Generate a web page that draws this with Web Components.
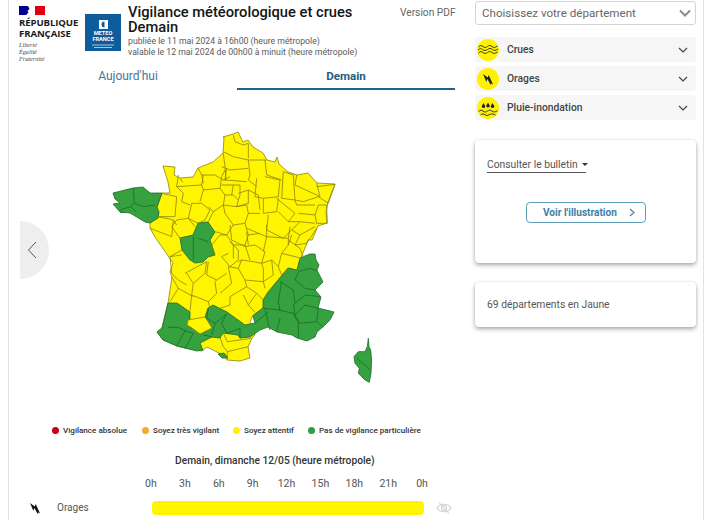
<!DOCTYPE html>
<html lang="fr">
<head>
<meta charset="utf-8">
<title>Vigilance</title>
<style>
  html, body { margin: 0; height: 520px; overflow: hidden; background: #fff; }
  body { font-family: Roboto, "Liberation Sans", sans-serif; }
</style>
</head>
<body>
<vigi-page>
  <vigi-header slot="header"></vigi-header>
  <vigi-tabs slot="main"></vigi-tabs>
  <vigi-map slot="main"></vigi-map>
  <vigi-legend slot="main"></vigi-legend>
  <vigi-timeline slot="main"></vigi-timeline>

  <dept-select slot="side"></dept-select>
  <risk-row slot="side" risk="crues">Crues</risk-row>
  <risk-row slot="side" risk="orages">Orages</risk-row>
  <risk-row slot="side" risk="pluie">Pluie-inondation</risk-row>
  <bulletin-card slot="side"></bulletin-card>
  <count-card slot="side">69 départements en Jaune</count-card>
</vigi-page>

<script>
const ICONS = {
  crues: `<path d="M1.500 8c2-1.800 3-1.800 4.500-.5s3 1.300 4.500 0 3-1.300 4.500 0 3 1.300 5.500-.5" /><path d="M1 11c2-1.800 3-1.800 4.500-.5s3.500 1.300 5 0 3.500-1.300 5 0 3 1.300 5.500-.5" /><path d="M1.500 14c2-1.800 3-1.800 4.500-.5s3 1.300 4.500 0 3-1.300 4.500 0 3 1.300 5.500-.5" />`,
  orages: `<path fill="#222" stroke="none" d="M6 6l4.800 3.600.9-2.600 4.300 9.500-1.900-1-.3 1.600-3.400-6-1.100 2.600z"/>`,
  pluie: `<path fill="#222" stroke="none" d="M6.500 6l1.800 3.300a1.800 1.800 0 1 1-3.600 0zM11 5.500l1.800 3.300a1.800 1.800 0 1 1-3.600 0zM15.500 6l1.800 3.300a1.800 1.800 0 1 1-3.600 0z"/><path d="M1.500 14.500c2-1.600 3-1.600 4.500-.4s3 1.200 4.500 0 3-1.200 4.500 0 3 1.200 5.500-.4"/><path d="M3.500 18c2-1.400 3-1.400 4.500-.3s2.500 1 4 0 3-1.100 6.500.3"/>`
}

class VigiPage extends HTMLElement {
  constructor() {
    super()
    this.attachShadow({ mode: 'open' })
    this.shadowRoot.innerHTML = `<style>
      :host { display: block; width: 696px; height: 520px; margin-left: 8px; box-sizing: border-box;
        border-left: 1px solid #e2e2e2; border-right: 1px solid #e2e2e2; overflow: hidden; }
      .cols { display: grid; grid-template-columns: 446px 221px; column-gap: 20px; }
      .main { display: flex; flex-direction: column; }
      .side { display: flex; flex-direction: column; padding-top: 1px; }
    </style>
    <div class="cols">
      <div class="main"><slot name="header"></slot><slot name="main"></slot></div>
      <div class="side"><slot name="side"></slot></div>
    </div>`
  }
}
customElements.define('vigi-page', VigiPage)

class VigiHeader extends HTMLElement {
  constructor() {
    super()
    this.attachShadow({ mode: 'open' })
    this.shadowRoot.innerHTML = `<style>
      :host { display: flex; height: 66px; padding: 5px 0 0 10px; box-sizing: border-box; }
      .rf { width: 66px; flex: none; }
      .flag { display: block; margin: 1px 0 2px; }
      .rf b { display: block; font: 700 9.600px/11px "Open Sans", sans-serif; color: #1a1a1a; white-space: nowrap; letter-spacing: -.1px; }
      .rf i { display: block; font: italic 6.200px/6.800px "Liberation Serif", serif; color: #444; margin-top: 3px; }
      .mf { width: 36px; height: 37px; background: #0f5c9c; margin-top: 9px; display: flex; flex-direction: column; align-items: center; color: #fff; flex: none; }
      .mf svg { margin-top: 6px; display: block; }
      .mf span { font: 700 5.600px/5.500px Roboto, sans-serif; text-align: center; margin-top: 2px; }
      .mf .tiny { margin-top: 2px; }
      .txt { margin-left: 7px; width: 267px; flex: none; }
      h1 { margin: 0; font: 500 14.700px/15px Roboto, sans-serif; color: #151515; white-space: nowrap; padding-bottom: 1px; }
      p { margin: 0; font: 400 8.700px/11px Roboto, sans-serif; color: #5a5a5a; white-space: nowrap; }
      .pdf { font: 400 10.200px/14px Roboto, sans-serif; color: #666; margin: 1px 0 0 5px; white-space: nowrap; }
    </style>
    <div class="rf">
      <svg class="flag" width="27" height="9" viewBox="0 0 27 9">
        <rect width="27" height="9" fill="#fff"/>
        <rect width="11" height="9" fill="#000091"/>
        <rect x="16" width="10" height="9" fill="#e1000f"/>
        <path fill="#fff" d="M9 0h4l-1 3 1.500 1.500-1 1.500.5 3H7l2.500-2.500L8.500 5 10.500 3z"/>
      </svg>
      <b>RÉPUBLIQUE<br>FRANÇAISE</b>
      <i>Liberté<br>Égalité<br>Fraternité</i>
    </div>
    <div class="mf">
      <svg width="9" height="9" viewBox="0 0 9 9"><rect width="9" height="9" fill="#fff"/><path d="M5.500 1.500a3 3 0 1 0 0 6z" fill="#0f5c9c"/></svg>
      <span>METEO<br>FRANCE</span>
      <svg class="tiny" width="24" height="5" viewBox="0 0 24 5"><path d="M1 1h22M3 3.500h18" stroke="#cfe0ee" stroke-width=".8"/></svg>
    </div>
    <div class="txt">
      <h1>Vigilance météorologique et crues<br>Demain</h1>
      <p>publiée le 11 mai 2024 à 16h00 (heure métropole)</p>
      <p>valable le 12 mai 2024 de 00h00 à minuit (heure métropole)</p>
    </div>
    <div class="pdf">Version PDF</div>`
  }
}
customElements.define('vigi-header', VigiHeader)

class VigiTabs extends HTMLElement {
  constructor() {
    super()
    this.attachShadow({ mode: 'open' })
    this.shadowRoot.innerHTML = `<style>
      :host { display: grid; grid-template-columns: 218px 218px; height: 24px; font: 400 12px/20px Roboto, sans-serif; padding-left: 10px; box-sizing: border-box; width: 446px; }
      div { text-align: center; color: #4b7396; box-sizing: border-box; height: 24px; }
      .on { color: #245f80; font-weight: 700; font-size: 11.600px; border-bottom: 2px solid #1f6388; }
    </style>
    <div>Aujourd'hui</div><div class="on">Demain</div>`
  }
}
customElements.define('vigi-tabs', VigiTabs)

class VigiMap extends HTMLElement {
  constructor() {
    super()
    this.attachShadow({ mode: 'open' })
    // traced by eye; inner borders are in zoomed crop coordinates (3x) inside each group
    this.shadowRoot.innerHTML = `<style>
      :host { display: block; position: relative; height: 323px; padding: 35px 0 0 91px; box-sizing: border-box; }
      svg { display: block; }
      .y { fill: #fff500; stroke: #8b8412; stroke-width: .8; stroke-linejoin: round; }
      .g { fill: #35a23f; stroke: #1d6a2b; stroke-width: .8; stroke-linejoin: round; }
      .ly path { fill: none; stroke: #8b8412; stroke-width: .8; vector-effect: non-scaling-stroke; }
      .lg path { fill: none; stroke: #1d6a2b; stroke-width: .8; vector-effect: non-scaling-stroke; }
      .lg path.g { fill: #35a23f; }
      .prev { position: absolute; left: 11px; top: 131px; width: 29px; height: 58px; background: #eee; border-radius: 0 29px 29px 0; display: flex; align-items: center; }
      .prev svg { margin-left: 7px; }
    </style>
    <div class="prev"><svg width="10" height="18" viewBox="0 0 10 18"><path d="M9 1 1.500 9 9 17" fill="none" stroke="#555" stroke-width="1"/></svg></div>
    <svg width="290" height="270" viewBox="100 125 290 270">
      <path class="y" d="M223 137 233 134 238 132 243 142 248 140 253 147 263 153 267 160 275 162 277 157 279 164 288 172 297 175 308 173 317 183 335 184 328 202 326 212 327 223 318 226 312 240 308 240 305 248 300 260 297 272 290 268 280 282 267 295 263 308 253 315 250 322 255 335 252 338 248 347 250 358 240 361 227 360 223 355 207 347 202 351 185 348 177 346 163 340 157 332 162 328 168 303 172 277 170 272 173 263 164 250 155 237 150 228 150 223 158 218 157 207 162 193 170 193 168 182 163 166 175 167 174 175 180 178 193 177 198 168 213 162 223 153 224 137z"/>
      <path class="g" d="M113 193 125 190 133 188 143 187 150 193 162 193 157 207 159 212 158 218 150 223 145 222 130 213 120 212 113 204 120 203 115 199z"/>
      <path class="g" d="M180 238 193 235 198 223 208 222 215 232 210 240 215 255 208 257 203 262 195 263 190 260 182 250z"/>
      <path class="g" d="M168 303 177 303 190 312 190 319 187 325 192 328 200 334 212 328 205 317 208 308 213 305 227 312 245 325 255 323 253 316 263 308 263 300 268 292 288 268 297 270 300 258 310 254 315 254 316 260 319 265 317 270 323 282 315 290 321 297 318 308 334 312 330 320 325 325 317 332 315 337 307 341 297 338 292 335 277 332 268 327 260 330 250 337 240 338 238 335 223 333 220 338 212 337 200 343 203 350 197 351 185 348 177 346 163 340 157 332 162 328z"/>
      <path class="y" d="M188 320 205 317 212 328 200 334 192 328 187 325z"/>
      <path class="g" d="M218 354 224 353 228 358 222 358z"/>
      <g class="ly" transform="translate(220 125) scale(.3333)">
        <path d="M40 30 45 50 70 60 85 55 85 100M10 80 40 95 85 105 140 105M5 125 30 135 85 130M85 105 90 150 85 165 110 185M135 105 140 150 185 165M20 130 15 165 80 170M190 140 185 220M110 160 105 215 130 220 175 215 180 165 135 155M190 140 220 150 225 225 185 220M230 150 225 180 290 210 300 215 290 175M225 225 250 230 295 215M290 185 345 178 325 235 295 215M295 240 320 240 322 295 290 295 285 270 295 240M225 225 230 240 285 240M130 220 130 265 170 260 175 220M170 220 225 265 205 290 175 260M235 265 285 270M240 290 285 295M205 290 240 290 215 315M145 270 140 315 190 340 215 315M215 330 205 360M215 315 240 330 285 305M240 330 225 360 260 355 290 310"/>
      </g>
      <g class="ly" transform="translate(100 125) scale(.3333)">
        <path d="M240 160 248 172 M185 205 230 215 225 275 175 275M175 275 220 285 215 335 150 310M220 285 230 300M295 130 305 150 345 150 370 165M305 150 310 175M370 85 375 125 378 165 370 165 390 155"/>
      </g>
      <g class="ly" transform="translate(170 170) scale(.3333)">
        <path d="M25 15 20 50 95 45 100 15M20 50 40 70 35 95 60 105M100 60 150 55 155 20 165 0M95 45 100 60 90 95M150 55 165 75 160 105 130 125 115 110M95 100 120 120 105 150 85 160 55 145 65 100 95 100M130 125 115 155M165 75 190 75 205 90 200 110 160 105M190 45 210 45 210 75 205 90M190 45 185 75M155 45 190 45M205 70 235 60 235 100 200 110M235 60 265 75 270 120M200 110 230 105 235 130 225 160 190 165 165 130 160 105M235 130 270 130M225 160 235 195 225 225 190 225 170 195 135 185M190 165 170 195M235 195 270 190M170 195 150 195 125 225 135 255M190 225 190 265M225 225 240 270M55 145 20 150 5 170 30 205M55 145 75 170"/>
      </g>
      <g class="ly" transform="translate(220 225) scale(.3333)">
        <path d="M30 50 55 75 55 105 30 125 5 95 25 85M30 0 35 45 75 65 105 60 135 80 125 115 100 110 65 105 55 110M80 20 85 60M80 10 140 35 130 80M140 0 140 35 205 40 210 5M205 40 205 60 185 85 175 125 155 105 125 115M205 45 240 70 250 95M185 85 245 100M175 125 185 150 205 130M155 105 160 150 130 170 130 130 125 115M65 105 55 130 75 165 130 170 135 190M55 130 25 125 35 175 0 205M75 165 80 185 30 215 30 240 0 250M80 185 110 205 130 225M70 210 85 240M110 205 85 240 105 262"/>
      </g>
      <g class="ly" transform="translate(140 240) scale(.3333)">
        <path d="M125 30 90 50 95 100 115 120 140 135M90 50 125 45M135 100 200 65 195 100 160 130 140 100M160 130 155 165 205 185 230 160 225 125M205 65 200 105 230 120 225 125M230 120 260 100M95 110 115 145 160 170M115 145 90 185M155 165 150 215M205 185 210 205M240 293 250 320 262 335 325 320M250 280 262 305 335 295M262 335 262 358"/>
      </g>
      <g class="lg" transform="translate(100 125) scale(.3333)">
        <path d="M100 190 103 235 92 245 110 262M103 235 130 245 165 240M92 245 60 255M60 262 75 262"/>
      </g>
      <g class="lg" transform="translate(170 170) scale(.3333)">
        <path d="M70 200 70 270M85 205 115 215"/>
      </g>
      <g class="lg" transform="translate(140 240) scale(.3333)">
        <path d="M85 262 115 262 135 272 110 318M135 272 160 280 135 325M190 285 215 290M205 205 200 235 225 250 260 222M225 250 215 285M260 222 245 250 260 280 300 265M300 265 300 295M345 250 385 215"/>
      </g>
      <g class="lg" transform="translate(250 240) scale(.3333)">
        <path class="g" d="M355 295 357 320 362 330 365 360 363 400 358 427 345 420 325 400 328 385 315 370 312 350 325 335 345 335 352 320z"/>
        <path d="M145 95 180 85 200 92M135 120 165 145 195 150M95 125 85 185 90 210M135 190 165 165 210 170M130 190 135 225 165 195 205 205M85 210 130 220 145 250M135 225 150 250 200 245 205 205M200 245 220 262M90 235 80 275M145 250 145 295M45 205 55 250 60 270M40 205 90 210M90 125 130 150 135 190M145 95 135 120M320 355 345 375 360 390"/>
      </g>
    </svg>`
  }
}
customElements.define('vigi-map', VigiMap)

class VigiLegend extends HTMLElement {
  constructor() {
    super()
    this.attachShadow({ mode: 'open' })
    const items = [
      ['#c4001a', 'Vigilance absolue', 90],
      ['#f7a92e', 'Soyez très vigilant', 91],
      ['#fff200', 'Soyez attentif', 75],
      ['#2f9e3f', 'Pas de vigilance particulière', 0]
    ]
    this.shadowRoot.innerHTML = `<style>
      :host { display: flex; height: 41px; padding: 10px 0 0 43px; box-sizing: border-box; font: 500 8.100px/14px Roboto, sans-serif; color: #333; white-space: nowrap; }
      div { display: flex; align-items: center; gap: 4px; height: 14px; }
      i { width: 7px; height: 7px; border-radius: 50%; display: block; }
    </style>` + items.map(([c, t, w]) => `<div style="${w ? 'width:' + w + 'px' : ''}"><i style="background:${c}"></i>${t}</div>`).join('')
  }
}
customElements.define('vigi-legend', VigiLegend)

class VigiTimeline extends HTMLElement {
  constructor() {
    super()
    this.attachShadow({ mode: 'open' })
    const hours = ['0h', '3h', '6h', '9h', '12h', '15h', '18h', '21h', '0h']
    this.shadowRoot.innerHTML = `<style>
      :host { display: block; font-family: Roboto, sans-serif; }
      h2 { margin: 0; font: 500 10.250px/14px Roboto, sans-serif; color: #333; padding-left: 166px; white-space: nowrap; }
      .hours { display: grid; grid-template-columns: repeat(9, 33.900px); margin: 9px 0 0 125px; font: 400 10.500px/14px Roboto, sans-serif; color: #555; text-align: center; }
      .row { display: flex; align-items: center; margin-top: 10px; height: 14px; }
      .ic { margin: 0 17px 0 21px; flex: none; }
      .name { font: 400 10px/14px Roboto, sans-serif; color: #555; width: 95px; flex: none; }
      .bar { width: 272px; height: 14px; border-radius: 4px; background: #fff500; flex: none; }
      .eye { margin-left: 12px; }
    </style>
    <h2>Demain, dimanche 12/05 (heure métropole)</h2>
    <div class="hours">${hours.map(h => `<span>${h}</span>`).join('')}</div>
    <div class="row">
      <svg class="ic" width="10" height="11" viewBox="1 2 10 11"><path fill="#111" d="M1 2l4.800 3.600.9-2.600 4.300 9.500-1.900-1-.3 1.600-3.400-6-1.100 2.600z"/></svg>
      <span class="name">Orages</span>
      <div class="bar"></div>
      <svg class="eye" width="16" height="14" viewBox="0 0 16 14" fill="none" stroke="#d2d2d2" stroke-width="1.100"><path d="M1 7c3-5 11-5 14 0-3 5-11 5-14 0z"/><circle cx="8" cy="7" r="2.500"/><path d="M3 1.500 13 12.500"/></svg>
    </div>`
  }
}
customElements.define('vigi-timeline', VigiTimeline)

class DeptSelect extends HTMLElement {
  constructor() {
    super()
    this.attachShadow({ mode: 'open' })
    this.shadowRoot.innerHTML = `<style>
      :host { display: flex; align-items: center; justify-content: space-between; height: 24px; box-sizing: border-box; border: 1px solid #d4d4d4; border-radius: 3px; padding: 0 4px 0 6px; margin-bottom: 12px; font: 400 11.600px/16px Roboto, sans-serif; color: #666; }
    </style>
    Choisissez votre département
    <svg width="12" height="8" viewBox="0 0 12 8"><path d="M1 1.500 6 6.500 11 1.500" fill="none" stroke="#8c8c8c" stroke-width="2"/></svg>`
  }
}
customElements.define('dept-select', DeptSelect)

class RiskRow extends HTMLElement {
  constructor() {
    super()
    this.attachShadow({ mode: 'open' })
    this.shadowRoot.innerHTML = `<style>
      :host { display: flex; align-items: center; height: 25px; background: #f6f6f7; border-radius: 3px; margin-bottom: 4px; font: 500 10.300px/14px Roboto, sans-serif; color: #444; padding-left: 2px; }
      .c { width: 22px; height: 22px; flex: none; border-radius: 50%; background: #fff200; margin-right: 8px; }
      .c svg { display: block; fill: none; stroke: #222; stroke-width: .9; }
      .t { flex: 1; }
      .chev { margin-right: 8px; }
    </style>
    <div class="c"><svg width="22" height="22" viewBox="0 0 22 22">${ICONS[this.getAttribute('risk')]}</svg></div>
    <span class="t"><slot></slot></span>
    <svg class="chev" width="10" height="6" viewBox="0 0 10 6"><path d="M1 1 5 5 9 1" fill="none" stroke="#444" stroke-width="1.200"/></svg>`
  }
}
customElements.define('risk-row', RiskRow)

class BulletinCard extends HTMLElement {
  constructor() {
    super()
    this.attachShadow({ mode: 'open' })
    this.shadowRoot.innerHTML = `<style>
      :host { display: block; height: 123px; box-sizing: border-box; margin-top: 16px; border-radius: 4px; background: #fff; box-shadow: 0 2px 4px rgba(0,0,0,.35), 0 0 2px rgba(0,0,0,.08); padding: 17px 12px 0; font: 400 10.300px/14px Roboto, sans-serif; color: #555; }
      .dd { width: 99px; height: 15px; border-bottom: 1px solid #555; white-space: nowrap; display: flex; align-items: center; gap: 4px; }
      .dd i { width: 0; height: 0; border: 3px solid transparent; border-top: 3.500px solid #333; border-bottom: 0; }
      .btn { width: 120px; height: 21px; box-sizing: border-box; margin: 29px 0 0 39px; border: 1px solid #5d9fb8; border-radius: 4px; display: flex; align-items: center; padding-left: 16px; font-weight: 700; font-size: 10.100px; color: #3c7fa8; white-space: nowrap; }
      .btn svg { margin-left: 12px; }
    </style>
    <div class="dd">Consulter le bulletin <i></i></div>
    <div class="btn">Voir l'illustration <svg width="6" height="9" viewBox="0 0 6 9"><path d="M1 1 5 4.500 1 8" fill="none" stroke="#4a7f9c" stroke-width="1.100"/></svg></div>`
  }
}
customElements.define('bulletin-card', BulletinCard)

class CountCard extends HTMLElement {
  constructor() {
    super()
    this.attachShadow({ mode: 'open' })
    this.shadowRoot.innerHTML = `<style>
      :host { display: flex; align-items: center; height: 45px; box-sizing: border-box; margin-top: 19px; border-radius: 4px; background: #fff; box-shadow: 0 2px 4px rgba(0,0,0,.35), 0 0 2px rgba(0,0,0,.08); padding: 0 12px; font: 400 10.300px/14px Roboto, sans-serif; color: #555; }
    </style><slot></slot>`
  }
}
customElements.define('count-card', CountCard)
</script>
</body>
</html>
